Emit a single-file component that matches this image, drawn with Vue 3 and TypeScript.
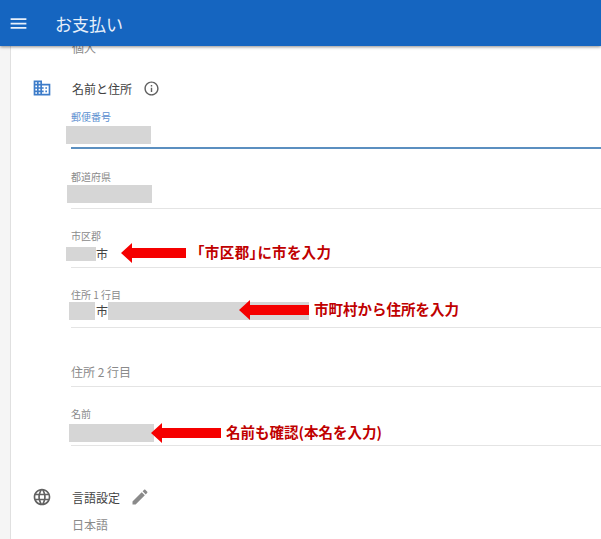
<script setup lang="ts">
interface Part {
  text?: string;
  gap?: number;
  width?: number;
}
interface Note {
  text: string;
  left: number;
  width: number;
  textLeft: number;
}
interface Field {
  key: string;
  label: string;
  parts: Part[];
  note?: Note;
}

const fields: Field[] = [
  { key: "postal", label: "郵便番号", parts: [{ gap: -5, width: 85 }] },
  { key: "pref", label: "都道府県", parts: [{ gap: -4, width: 85 }] },
  {
    key: "city",
    label: "市区郡",
    parts: [{ gap: -5, width: 30 }, { text: "市" }],
    note: { text: "「市区郡」に市を入力", left: 50, width: 65, textLeft: 126 },
  },
  {
    key: "line1",
    label: "住所 1 行目",
    parts: [{ gap: -2, width: 26 }, { text: "市" }, { width: 201 }],
    note: { text: "市町村から住所を入力", left: 168, width: 70, textLeft: 243 },
  },
  { key: "line2", label: "住所 2 行目", parts: [] },
  {
    key: "name",
    label: "名前",
    parts: [{ gap: -2, width: 85 }],
    note: { text: "名前も確認(本名を入力)", left: 80, width: 70, textLeft: 155 },
  },
];

function arrowPoints(w: number) {
  return `0,10 11,0 11,5 ${w},5 ${w},15 11,15 11,20`;
}
</script>

<template>
  <div class="page">
    <header class="topbar">
      <svg class="menu" viewBox="0 0 24 24" width="21" height="21">
        <path d="M3 18h18v-2H3v2zm0-5h18v-2H3v2zm0-7v2h18V6H3z" />
      </svg>
      <h1>お支払い</h1>
    </header>

    <main class="sheet">
      <p class="clipped">個人</p>

      <section class="title-row">
        <svg class="icon blue" viewBox="0 0 24 24" width="20" height="20">
          <path d="M12 7V3H2v18h20V7H12zM6 19H4v-2h2v2zm0-4H4v-2h2v2zm0-4H4V9h2v2zm0-4H4V5h2v2zm4 12H8v-2h2v2zm0-4H8v-2h2v2zm0-4H8V9h2v2zm0-4H8V5h2v2zm10 12h-8v-2h2v-2h-2v-2h2v-2h-2V9h8v10zm-2-8h-2v2h2v-2zm0 4h-2v2h2v-2z" />
        </svg>
        <span class="title">名前と住所</span>
        <svg class="info" viewBox="0 0 24 24" width="17" height="17">
          <path d="M11 7h2v2h-2zm0 4h2v6h-2zm1-9C6.48 2 2 6.48 2 12s4.48 10 10 10 10-4.48 10-10S17.52 2 12 2zm0 18c-4.41 0-8-3.59-8-8s3.59-8 8-8 8 3.59 8 8-3.59 8-8 8z" />
        </svg>
      </section>

      <div class="fields">
        <div v-for="f in fields" :key="f.key" class="field" :class="f.key">
          <div class="label">{{ f.label }}</div>
          <div v-if="f.parts.length" class="value">
            <template v-for="(p, i) in f.parts" :key="i">
              <span v-if="p.text" class="typed">{{ p.text }}</span>
              <span
                v-else
                class="redact"
                :style="{ width: p.width + 'px', marginLeft: (p.gap ?? 0) + 'px' }"
              ></span>
            </template>
          </div>
          <template v-if="f.note">
            <svg
              class="arrow"
              :style="{ left: f.note.left + 'px' }"
              :width="f.note.width"
              height="20"
            >
              <polygon :points="arrowPoints(f.note.width)" fill="#f50000" />
            </svg>
            <span class="note" :style="{ left: f.note.textLeft + 'px' }">{{ f.note.text }}</span>
          </template>
        </div>
      </div>

      <section class="title-row lang">
        <svg class="icon" viewBox="0 0 24 24" width="20" height="20">
          <path d="M11.99 2C6.47 2 2 6.48 2 12s4.47 10 9.99 10C17.52 22 22 17.52 22 12S17.52 2 11.99 2zm6.93 6h-2.95c-.32-1.25-.78-2.45-1.38-3.56 1.84.63 3.37 1.91 4.33 3.56zM12 4.04c.83 1.2 1.48 2.53 1.91 3.96h-3.82c.43-1.43 1.08-2.76 1.91-3.96zM4.26 14C4.1 13.36 4 12.69 4 12s.1-1.36.26-2h3.38c-.08.66-.14 1.32-.14 2 0 .68.06 1.34.14 2H4.26zm.82 2h2.95c.32 1.25.78 2.45 1.38 3.56-1.84-.63-3.37-1.9-4.33-3.56zm2.95-8H5.08c.96-1.66 2.49-2.93 4.33-3.56C8.81 5.55 8.35 6.75 8.03 8zM12 19.96c-.83-1.2-1.48-2.53-1.91-3.96h3.82c-.43 1.43-1.08 2.76-1.91 3.96zM14.34 14H9.66c-.09-.66-.16-1.32-.16-2 0-.68.07-1.35.16-2h4.68c.09.65.16 1.32.16 2 0 .68-.07 1.34-.16 2zm.25 5.56c.6-1.11 1.06-2.31 1.38-3.56h2.95c-.96 1.65-2.49 2.93-4.33 3.56zM16.36 14c.08-.66.14-1.32.14-2 0-.68-.06-1.34-.14-2h3.38c.16.64.26 1.31.26 2s-.1 1.36-.26 2h-3.38z" />
        </svg>
        <span class="title">言語設定</span>
        <svg class="pencil" viewBox="0 0 24 24" width="20" height="20">
          <path d="M3 17.25V21h3.75L17.81 9.94l-3.75-3.75L3 17.25zM20.71 7.04c.39-.39.39-1.02 0-1.41l-2.34-2.34c-.39-.39-1.02-.39-1.41 0l-1.83 1.83 3.75 3.75 1.83-1.83z" />
        </svg>
      </section>
      <p class="lang-value">日本語</p>
    </main>
  </div>
</template>

<style>
html,
body {
  margin: 0;
  background: #fff;
  overflow: hidden;
}
</style>

<style scoped>
.page {
  height: 539px;
  overflow: hidden;
  font-family: "Noto Sans CJK JP", "Liberation Sans", sans-serif;
  color: #424242;
}

.topbar {
  position: relative;
  z-index: 2;
  display: flex;
  align-items: center;
  height: 46px;
  background: #1565c0;
  box-shadow: 0 1px 3px rgba(0, 0, 0, 0.45);
}
.menu {
  margin-left: 8px;
  fill: #e8f0fa;
}
h1 {
  margin: 0 0 0 26px;
  font-size: 17px;
  font-weight: 400;
  color: #e8f0fa;
}

.sheet {
  height: 520px;
  margin-left: 10px;
  padding-left: 21px;
  border-left: 1px solid #e0e0e0;
  box-shadow: -10px 0 0 #f5f5f5;
}

.clipped {
  margin: -7px 0 0 40px;
  height: 21px;
  font-size: 12px;
  line-height: 18px;
  color: #8a8a8a;
}

.title-row {
  display: flex;
  align-items: center;
  height: 20px;
  margin-top: 18px;
}
.icon {
  fill: #616161;
}
.icon.blue {
  fill: #3d7cc9;
}
.title {
  margin-left: 20px;
  font-size: 12px;
  color: #424242;
}
.info {
  margin-left: 11px;
  fill: #5f5f5f;
}
.pencil {
  margin-left: 10px;
  fill: #8a8a8a;
}

.fields {
  margin-left: 39px;
}
.field {
  position: relative;
  box-sizing: border-box;
  height: 59px;
  padding-top: 20px;
  border-bottom: 1px solid #e4e4e4;
}
.label {
  height: 14px;
  font-size: 10px;
  line-height: 14px;
  color: #8a8a8a;
}
.value {
  display: flex;
  align-items: stretch;
  height: 18px;
  margin-top: 0;
}
.typed {
  width: 12px;
  padding-left: 1px;
  font-size: 12px;
  line-height: 18px;
  color: #424242;
}
.redact {
  background: #d6d6d6;
}

.postal {
  height: 39px;
  margin-top: 12px;
  padding-top: 0;
  border-bottom: 2px solid #5b8fc0;
}
.postal .label {
  color: #5b8fd0;
}
.postal .value {
  margin-top: 2px;
}
.pref {
  height: 60px;
  padding-top: 21px;
}
.pref .value {
  margin-top: 1px;
}
.city .value {
  height: 14px;
  margin-top: 4px;
}
.city .typed {
  padding-left: 0;
  line-height: 14px;
}
.line1 {
  height: 60px;
}
.line2 {
  padding-top: 36px;
}
.line2 .label {
  height: 16px;
  font-size: 12px;
  line-height: 16px;
}
.name .value {
  margin-top: 3px;
}

.arrow {
  position: absolute;
  top: 34px;
}
.note {
  position: absolute;
  top: 33px;
  font-size: 14.5px;
  font-weight: 700;
  line-height: 20px;
  white-space: nowrap;
  color: #c00000;
}
.city .note {
  font-feature-settings: "palt";
  letter-spacing: 0.5px;
}
.line1 .arrow {
  top: 32px;
}
.line1 .note {
  top: 31px;
}
.name .arrow {
  top: 36px;
}
.name .note {
  top: 35px;
}

.lang {
  margin-top: 41px;
}
.lang-value {
  margin: 10px 0 0 40px;
  font-size: 12px;
  line-height: 16px;
  color: #8a8a8a;
}
</style>
